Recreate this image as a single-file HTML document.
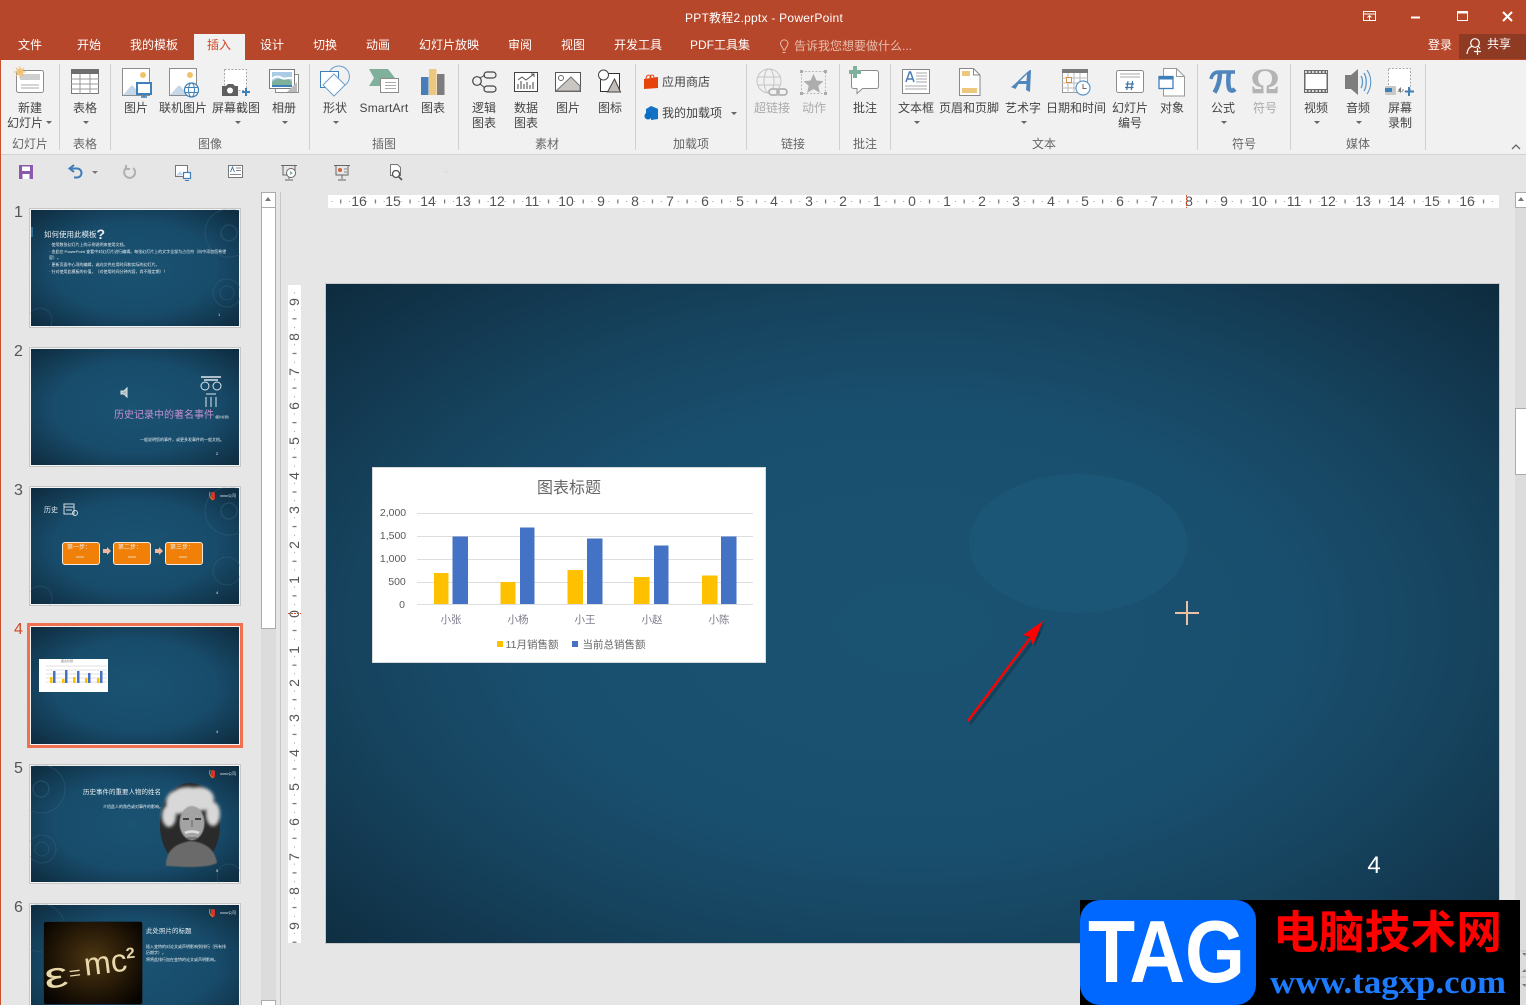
<!DOCTYPE html>
<html lang="zh"><head><meta charset="utf-8"><title>PPT教程2.pptx - PowerPoint</title>
<style>
html,body{margin:0;padding:0;background:#e6e6e6;width:1526px;height:1005px;overflow:hidden}
#p{width:1526px;height:1005px;position:relative;overflow:hidden;font:12px "Liberation Sans","Noto Sans CJK SC",sans-serif;color:#444}
.a{position:absolute}
.t{position:absolute;transform:translate(-50%,-50%);white-space:nowrap;line-height:1}
.w{color:#fff}.g{color:#666}.d{color:#aaa}
svg{position:absolute;left:0;top:0;overflow:visible}
.l{margin-top:1px}
.th{position:absolute;left:29px;width:210px;height:118px;border:1px solid #c6c6c6;overflow:hidden;background:#f4f4f4}
.th .s{position:absolute;left:1px;top:1px;width:208px;height:116px;filter:blur(.3px);background:radial-gradient(farthest-corner at 50% 50%,#1a5272 0%,#184c6b 55%,#0e2b3e 100%)}
.th .x{position:absolute;white-space:nowrap;color:#e8eef2;line-height:1}
.num{position:absolute;left:14px;font-size:16px;color:#555;line-height:1}
</style></head><body><div id="p">

<div class="a" style="left:0;top:0;width:1526px;height:60px;background:#b7472a"></div>
<div class="a" style="left:194px;top:34px;width:51px;height:26px;background:#f1f1f1"></div>
<div class="a" style="left:1459px;top:34px;width:67px;height:25px;background:#8f3a22"></div>
<div class="a" style="left:1px;top:60px;width:1525px;height:94px;background:#f1f1f1;border-bottom:1px solid #d2d2d2"></div>
<div class="a" style="left:0;top:60px;width:1px;height:945px;background:#c8512f"></div>

<div class="t w" style="left:764px;top:18px;letter-spacing:.25px">PPT教程2.pptx - PowerPoint</div>
<div class="t w" style="left:30px;top:45px">文件</div>
<div class="t w" style="left:89px;top:45px">开始</div>
<div class="t w" style="left:154px;top:45px">我的模板</div>
<div class="t" style="left:219px;top:45px;color:#d24726">插入</div>
<div class="t w" style="left:272px;top:45px">设计</div>
<div class="t w" style="left:325px;top:45px">切换</div>
<div class="t w" style="left:378px;top:45px">动画</div>
<div class="t w" style="left:449px;top:45px">幻灯片放映</div>
<div class="t w" style="left:520px;top:45px">审阅</div>
<div class="t w" style="left:573px;top:45px">视图</div>
<div class="t w" style="left:638px;top:45px">开发工具</div>
<div class="t w" style="left:720px;top:45px">PDF工具集</div>
<div class="t" style="left:853px;top:46px;color:#e6bdae">告诉我您想要做什么...</div>
<div class="t w" style="left:1440px;top:45px">登录</div>
<div class="t w" style="left:1499px;top:44px">共享</div>

<!-- ribbon labels -->
<div class="t l" style="left:30px;top:107px">新建</div><div class="t l" style="left:25px;top:122px">幻灯片</div>
<div class="t l" style="left:85px;top:107px">表格</div>
<div class="t l" style="left:136px;top:107px">图片</div>
<div class="t l" style="left:183px;top:107px">联机图片</div>
<div class="t l" style="left:236px;top:107px">屏幕截图</div>
<div class="t l" style="left:284px;top:107px">相册</div>
<div class="t l" style="left:335px;top:107px">形状</div>
<div class="t l" style="left:384px;top:107px;letter-spacing:.2px">SmartArt</div>
<div class="t l" style="left:433px;top:107px">图表</div>
<div class="t l" style="left:484px;top:107px">逻辑</div><div class="t l" style="left:484px;top:122px">图表</div>
<div class="t l" style="left:526px;top:107px">数据</div><div class="t l" style="left:526px;top:122px">图表</div>
<div class="t l" style="left:568px;top:107px">图片</div>
<div class="t l" style="left:610px;top:107px">图标</div>
<div class="t" style="left:686px;top:82px">应用商店</div>
<div class="t" style="left:692px;top:113px">我的加载项</div>
<div class="t l d" style="left:772px;top:107px">超链接</div>
<div class="t l d" style="left:814px;top:107px">动作</div>
<div class="t l" style="left:865px;top:107px">批注</div>
<div class="t l" style="left:916px;top:107px">文本框</div>
<div class="t l" style="left:969px;top:107px">页眉和页脚</div>
<div class="t l" style="left:1023px;top:107px">艺术字</div>
<div class="t l" style="left:1076px;top:107px">日期和时间</div>
<div class="t l" style="left:1130px;top:107px">幻灯片</div><div class="t l" style="left:1130px;top:122px">编号</div>
<div class="t l" style="left:1172px;top:107px">对象</div>
<div class="t l" style="left:1223px;top:107px">公式</div>
<div class="t l d" style="left:1265px;top:107px">符号</div>
<div class="t l" style="left:1316px;top:107px">视频</div>
<div class="t l" style="left:1358px;top:107px">音频</div>
<div class="t l" style="left:1400px;top:107px">屏幕</div><div class="t l" style="left:1400px;top:122px">录制</div>

<div class="t g" style="left:30px;top:144px">幻灯片</div>
<div class="t g" style="left:85px;top:144px">表格</div>
<div class="t g" style="left:210px;top:144px">图像</div>
<div class="t g" style="left:384px;top:144px">插图</div>
<div class="t g" style="left:547px;top:144px">素材</div>
<div class="t g" style="left:691px;top:144px">加载项</div>
<div class="t g" style="left:793px;top:144px">链接</div>
<div class="t g" style="left:865px;top:144px">批注</div>
<div class="t g" style="left:1044px;top:144px">文本</div>
<div class="t g" style="left:1244px;top:144px">符号</div>
<div class="t g" style="left:1358px;top:144px">媒体</div>

<!-- ribbon icons -->
<svg width="1526" height="190" viewBox="0 0 1526 190" fill="none">
<!-- window buttons -->
<g stroke="#fff">
<rect x="1363.500" y="11.500" width="12" height="9" stroke-width="1"/><path d="M1363 14h13M1369.500 20v-4M1367.500 17.500l2-2 2 2"/>
<path d="M1411 17.500h9" stroke-width="2"/>
<rect x="1457.500" y="11.500" width="10" height="9" stroke-width="1"/><path d="M1457 12.500h11" stroke-width="2"/>
<path d="M1503 12l9 9M1512 12l-9 9" stroke-width="2"/>
<circle cx="1475" cy="43" r="4.300" stroke-width="1.200"/><path d="M1467 54c.5-5 3-7.500 5-7.500M1478 46.500c1 .5 1.500 1 2 2M1474 51.500h7M1477.500 48v7" stroke-width="1.200"/>
</g>
<!-- bulb -->
<path d="M783.500 50c0-2-3-3.500-3-7a3.800 3.800 0 0 1 7.500 0c0 3.500-3 5-3 7zM782.500 52.500h3" stroke="#e6bdae"/>
<!-- separators -->
<path d="M59.500 64v86M110.500 64v86M309.500 64v86M458.500 64v86M635.500 64v86M746.500 64v86M839.500 64v86M890.500 64v86M1197.500 64v86M1290.500 64v86M1425.500 64v86" stroke="#d0d0d0"/>
<!-- carets -->
<path d="M46 121h6l-3 3zM83 121h6l-3 3zM235 121h6l-3 3zM282 121h6l-3 3zM333 121h6l-3 3zM731 112h6l-3 3zM914 121h6l-3 3zM1021 121h6l-3 3zM1221 121h6l-3 3zM1314 121h6l-3 3zM1356 121h6l-3 3z" fill="#666"/>
<path d="M1512 149l4-4 4 4" stroke="#666" stroke-width="1.300"/>
<!-- new slide -->
<rect x="16.500" y="70.500" width="27" height="22" rx="2" fill="#fff" stroke="#8c8c8c"/>
<rect x="20" y="74" width="20" height="6" fill="#cfcfcf"/><path d="M21 85h18M21 88h18" stroke="#aaa"/>
<circle cx="20" cy="72" r="3.500" fill="#f5cf8a"/><path d="M20 66v12M14 72h12M16 68l8 8M24 68l-8 8" stroke="#f0bd6c"/>
<!-- table -->
<rect x="71.500" y="69.500" width="27" height="24" fill="#fff" stroke="#7a7a7a"/><rect x="71" y="69" width="28" height="5" fill="#6e6e6e"/>
<path d="M71 79h28M71 84h28M71 89h28M80 74v20M90 74v20" stroke="#999"/>
<!-- picture -->
<rect x="122.500" y="68.500" width="27" height="27" fill="#fff" stroke="#8c8c8c"/>
<path d="M123 95l9-10 5 5 2-2 6 7z" fill="#c6d7e8"/><circle cx="143" cy="75" r="3" fill="#eec46a"/>
<rect x="137" y="83" width="14" height="11" fill="#fff" stroke="#3f80b8" stroke-width="2"/><path d="M141 97h6M144 94v3" stroke="#3f80b8" stroke-width="1.500"/>
<!-- online picture -->
<rect x="169.500" y="68.500" width="27" height="27" fill="#fff" stroke="#8c8c8c"/>
<path d="M170 95l9-10 5 5 2-2 6 7z" fill="#c6d7e8"/><circle cx="190" cy="75" r="3" fill="#eec46a"/>
<circle cx="191.500" cy="90" r="7" fill="#fff" stroke="#3f80b8" stroke-width="1.200"/><ellipse cx="191.500" cy="90" rx="3" ry="7" stroke="#3f80b8"/><path d="M184.500 87.500h14M184.500 92.500h14" stroke="#3f80b8"/>
<!-- screenshot -->
<rect x="224.500" y="69.500" width="22" height="21" fill="#fff" stroke="#aaa" stroke-dasharray="2 1.500"/>
<path d="M222 86h4l2-2h5l2 2h3v10h-16z" fill="#5f5f5f"/><circle cx="230" cy="90.500" r="3" fill="#fff"/>
<path d="M246 88v8M242 92h8" stroke="#3f80b8" stroke-width="2"/>
<!-- album -->
<rect x="275.500" y="74.500" width="23" height="18" fill="#fff" stroke="#8c8c8c"/>
<rect x="269.500" y="69.500" width="25" height="19" fill="#fff" stroke="#7a7a7a"/>
<rect x="272" y="72" width="20" height="14" fill="#a9cbe6"/><path d="M272 82c5-5 8-2 12-3s6 1 8 3v4h-20z" fill="#7fb09b"/><path d="M272 79c3-3 7-3 10-1s6-1 10 0" stroke="#fff" stroke-width="2"/>
<path d="M272 86h20" stroke="#3f80b8" stroke-width="2"/><path d="M287 92l10-10v10z" fill="#bbb"/>
<!-- shapes -->
<rect x="320.500" y="71.500" width="18" height="16" fill="#fff" stroke="#3f80b8"/>
<path d="M330 71a10.500 10.500 0 1 1 8 16" stroke="#6a9fcc"/>
<path d="M334 74l11 11-11 11-11-11z" fill="#fff" stroke="#6a9fcc"/>
<!-- smartart -->
<path d="M369 69h19l7 9-7 8h-19l5-8z" fill="#7fb09b"/>
<rect x="380.500" y="78.500" width="18" height="14" fill="#fff" stroke="#8c8c8c"/><path d="M385 82.500h11M385 85.500h11M385 88.500h11" stroke="#aaa"/>
<!-- chart -->
<rect x="421" y="77" width="7.500" height="18" fill="#4a7db5"/><rect x="429" y="69" width="7.500" height="26" fill="#eec77e"/><rect x="437" y="74" width="7.500" height="21" fill="#7d7d7d"/>
<!-- logic -->
<circle cx="477" cy="81" r="4.300" stroke="#444" stroke-width="1.200"/><rect x="484" y="72" width="12" height="6" rx="3" stroke="#444" stroke-width="1.200"/><rect x="484" y="86" width="12" height="6" rx="3" stroke="#444" stroke-width="1.200"/><path d="M480 78l5-3M480 84l5 4" stroke="#444"/>
<!-- data chart -->
<rect x="514.500" y="72.500" width="23" height="19" fill="#fff" stroke="#444"/><path d="M518 89v-5M521 89v-8M524 89v-5M527 89v-7M530 89v-4M533 89v-7" stroke="#444"/><path d="M518 80l4-3 4 3 8-6M531 74h3v3" stroke="#555"/>
<!-- image -->
<rect x="555.500" y="72.500" width="25" height="19" fill="#fff" stroke="#555"/><path d="M556 91l15-14 9 9v5z" fill="#c9c5c0" stroke="#777"/><circle cx="561" cy="78" r="2.500" stroke="#666"/>
<!-- icons -->
<rect x="600.500" y="73.500" width="19" height="18" fill="#fff" stroke="#333"/><path d="M614.500 79l6 13h-13z" fill="#c2bdb7" stroke="#444"/><circle cx="603.500" cy="75" r="5" fill="#fff" stroke="#444"/>
<!-- store -->
<path d="M644 79l14-2v11l-14 1z" fill="#e8420b"/><path d="M646 79c0-5 5-5 5-1M650 78c0-4 4-4 4 0" stroke="#e8420b"/>
<path d="M651 106l7 3v10l-7 1z" fill="#0a6fc2"/><path d="M651 106l-5 3v5h5v6l7-2v-9z" fill="#1272c4"/><circle cx="648" cy="116" r="3.500" fill="#0a6fc2"/>
<!-- hyperlink -->
<g stroke="#c4c4c4"><circle cx="769" cy="81" r="12"/><ellipse cx="769" cy="81" rx="5" ry="12"/><path d="M758 77h22M758 85h22"/></g>
<rect x="769" y="89" width="10" height="6" rx="3" stroke="#b2b2b2" stroke-width="1.800" fill="#f1f1f1"/><rect x="777" y="89" width="10" height="6" rx="3" stroke="#b2b2b2" stroke-width="1.800"/>
<!-- action -->
<rect x="801.500" y="71.500" width="24" height="22" stroke="#bbb" stroke-dasharray="2 1.500"/><path d="M800 70h3v3h-3zM824 70h3v3h-3zM800 92h3v3h-3zM824 92h3v3h-3z" fill="#aaa"/>
<path d="M813.500 74l3 6.500 7 .7-5.200 4.500 1.600 7-6.400-3.600-6.400 3.600 1.600-7-5.200-4.500 7-.7z" fill="#adadad"/>
<!-- comment -->
<path d="M853.500 70.500h23a2 2 0 0 1 2 2v14a2 2 0 0 1-2 2h-14l-5.500 5v-5h-3.500a2 2 0 0 1-2-2v-14a2 2 0 0 1 2-2z" fill="#fff" stroke="#8c8c8c"/>
<path d="M855 66v12M849 72h12" stroke="#7fb09b" stroke-width="4"/>
<!-- textbox -->
<rect x="902.500" y="69.500" width="27" height="24" fill="#fff" stroke="#888"/><path d="M906 82l3.500-10h1l3.500 10M907.500 79h5" stroke="#4a7db5" stroke-width="1.500"/><path d="M916 73h11M916 76h11M916 79h11M916 82h11M905 86h22M905 89h22" stroke="#aaa"/>
<!-- header/footer -->
<path d="M959.500 68.500h14l6.500 6.500v20.500h-20.500z" fill="#fff" stroke="#888"/><path d="M973.500 68.500v6.500h6.500" stroke="#888"/><rect x="962" y="71" width="8" height="5" fill="#eec77e"/><rect x="962" y="88" width="15" height="5" fill="#eec77e"/>
<!-- wordart -->
<path d="M1011 87c6-4 12-12 19-17h1l-1 22-4-2 .5-6h-8l-3 5zM1020 81h6.500l.5-7z" fill="#4f86bd"/>
<!-- date -->
<rect x="1062.500" y="69.500" width="25" height="23" fill="#fff" stroke="#999"/><rect x="1062" y="69" width="26" height="4" fill="#7a7a7a"/><path d="M1062 78h26M1062 83h26M1062 88h26M1068 73v20M1074 73v20M1080 73v20" stroke="#bbb"/><rect x="1066.500" y="77.500" width="5" height="5" fill="#fff" stroke="#e08a3a"/>
<circle cx="1083" cy="88" r="7" fill="#fff" stroke="#5d97c9" stroke-width="1.200"/><path d="M1083 84v4.500h3.500" stroke="#666"/>
<!-- slide number -->
<rect x="1116.500" y="70.500" width="27" height="22" rx="2" fill="#fff" stroke="#8c8c8c"/><path d="M1120 74h20M1120 77h20" stroke="#aaa"/><path d="M1128 81l-1.200 9M1132.500 81l-1.200 9M1125.500 84h8.500M1125 87.500h8.500" stroke="#3f72a8" stroke-width="1.200"/>
<!-- object -->
<g transform="translate(1 0)"><path d="M1162.500 68.500h13l8 8v19.500h-21z" fill="#fff" stroke="#999"/><path d="M1175.500 68.500v8h8" stroke="#999"/><rect x="1158" y="76.500" width="14" height="12" fill="#fff" stroke="#3f80b8" stroke-width="1.300"/><rect x="1158" y="76" width="14" height="3.500" fill="#3f80b8"/></g>
<!-- pi -->
<path d="M1211 79c1-5 4-7 8-7h16" stroke="#4f86bd" stroke-width="3.500"/><path d="M1220 72c0 8-2 15-5.500 20.500" stroke="#4f86bd" stroke-width="4.500"/><path d="M1229 72c-1 7-1 12 0 16 1 3 3.500 3.500 6 1" stroke="#4f86bd" stroke-width="4.500"/>
<!-- omega -->
<text x="1265" y="93" text-anchor="middle" font-family="Liberation Serif" font-weight="700" font-size="36" fill="#b4b4b4">Ω</text>
<!-- video -->
<g transform="translate(2 0)"><rect x="1302" y="70" width="24" height="23" fill="#6b6b6b"/><rect x="1303.500" y="74" width="21" height="15" fill="#fff"/><path d="M1303 72h22M1303 91h22" stroke="#fff" stroke-width="1.500" stroke-dasharray="2 1.500"/></g>
<!-- audio -->
<g transform="translate(2 0)"><path d="M1343 75h6l7-6v26l-7-6h-6z" fill="#7d7d7d"/><path d="M1359 76c2 3 2 9 0 12M1362 73c3 5 3 13 0 18" stroke="#5d97c9" stroke-width="1.300"/><path d="M1365 70c5 7 5 17 0 24" stroke="#5d97c9" stroke-width="1.100"/></g>
<!-- record -->
<g transform="translate(2 0)"><rect x="1386.500" y="68.500" width="22" height="23" fill="#fff" stroke="#aaa" stroke-dasharray="2 1.500"/><rect x="1383" y="86" width="11" height="9" rx="1" fill="#c8c8c8"/><path d="M1383 90h7" stroke="#3f80b8" stroke-width="4"/><path d="M1396 90l3-3v6z" fill="#777"/><path d="M1400 90h2" stroke="#777"/>
<path d="M1407 87v9M1403 91.500h9" stroke="#3f80b8" stroke-width="2"/></g>
<!-- QAT -->
<path d="M19 165h14v14h-14z" fill="#8a5aad"/><rect x="22" y="166.500" width="8" height="4.500" fill="#fff"/><rect x="22.500" y="174" width="7" height="5" fill="#fff"/>
<path d="M74 165l-4.500 3.500 4.500 3.500" stroke="#3f7cb8" stroke-width="2"/><path d="M70 168.500h7a4.500 4.500 0 0 1 0 9h-3" stroke="#3f7cb8" stroke-width="2"/><path d="M92 171h6l-3 3z" fill="#777"/>
<path d="M133 168a5.500 5.500 0 1 1-6-.5M126 165v4h4" stroke="#b0b0b0" stroke-width="2"/>
<rect x="175.500" y="165.500" width="12" height="11" fill="#fff" stroke="#777"/><path d="M176 176l4-5 3 4z" fill="#c6d7e8"/><rect x="183.500" y="172.500" width="7" height="6" fill="#fff" stroke="#3f80b8" stroke-width="1.200"/><path d="M185 180.500h4" stroke="#3f80b8"/>
<rect x="228.500" y="165.500" width="14" height="12" fill="#fff" stroke="#777"/><path d="M230.500 172l2-5 2 5" stroke="#3f80b8"/><path d="M236 168h5M236 170.500h5M230 174.500h11" stroke="#888"/>
<path d="M281 165.500h16M283 166v9h12v-9M289 175v4M285 180h8" stroke="#666"/><circle cx="291" cy="173" r="4.500" fill="#fff" stroke="#666"/><path d="M290 171l3 2-3 2z" fill="#7fb09b"/>
<path d="M334 165.500h16M336 166v9h12v-9M342 175v4M338 180h8" stroke="#666"/><circle cx="340" cy="170" r="2" fill="#d2603a"/><path d="M344 169h3M344 172h3" stroke="#888"/>
<path d="M390.500 164.500h7l3 3v8h-10z" fill="#fff" stroke="#777"/><circle cx="396" cy="174" r="3.500" fill="#fff" stroke="#555" stroke-width="1.300"/><path d="M398.500 176.500l3.500 3.500" stroke="#555" stroke-width="1.600"/>
<path d="M443 171h6l-3 3z" fill="#e0e0e0"/><path d="M443 169h6" stroke="#e0e0e0"/>
</svg>

<!-- rulers -->
<svg width="1526" height="1005" viewBox="0 0 1526 1005" fill="none" font-family="Liberation Sans" font-size="14" style="pointer-events:none">
<defs>
<pattern id="rh" patternUnits="userSpaceOnUse" x="912" y="195" width="34.630" height="13"><rect x="8.200" y="6" width="1" height="1" fill="#999"/><rect x="17" y="4.500" width="1" height="4" fill="#555"/><rect x="25.800" y="6" width="1" height="1" fill="#999"/></pattern>
<pattern id="rv" patternUnits="userSpaceOnUse" x="288" y="613" width="13" height="34.630"><rect x="6" y="8.200" width="1" height="1" fill="#999"/><rect x="4.500" y="17" width="4" height="1" fill="#555"/><rect x="6" y="25.800" width="1" height="1" fill="#999"/></pattern>
</defs>
<rect x="328" y="195" width="1171" height="13" fill="#fff"/><rect x="328" y="195" width="1171" height="13" fill="url(#rh)"/>
<rect x="288" y="285" width="13" height="658" fill="#fff"/><rect x="288" y="285" width="13" height="658" fill="url(#rv)"/>
<g fill="#555" text-anchor="middle">
<text x="359" y="206">16</text><text x="393" y="206">15</text><text x="428" y="206">14</text><text x="463" y="206">13</text><text x="497" y="206">12</text><text x="532" y="206">11</text><text x="566" y="206">10</text><text x="601" y="206">9</text><text x="635" y="206">8</text><text x="670" y="206">7</text><text x="705" y="206">6</text><text x="740" y="206">5</text><text x="774" y="206">4</text><text x="809" y="206">3</text><text x="843" y="206">2</text><text x="877" y="206">1</text><text x="912" y="206">0</text><text x="947" y="206">1</text><text x="982" y="206">2</text><text x="1016" y="206">3</text><text x="1051" y="206">4</text><text x="1085" y="206">5</text><text x="1120" y="206">6</text><text x="1154" y="206">7</text><text x="1189" y="206">8</text><text x="1224" y="206">9</text><text x="1259" y="206">10</text><text x="1294" y="206">11</text><text x="1328" y="206">12</text><text x="1363" y="206">13</text><text x="1397" y="206">14</text><text x="1432" y="206">15</text><text x="1467" y="206">16</text>
<text transform="translate(299,302) rotate(-90)">9</text><text transform="translate(299,337) rotate(-90)">8</text><text transform="translate(299,372) rotate(-90)">7</text><text transform="translate(299,406) rotate(-90)">6</text><text transform="translate(299,441) rotate(-90)">5</text><text transform="translate(299,476) rotate(-90)">4</text><text transform="translate(299,510) rotate(-90)">3</text><text transform="translate(299,545) rotate(-90)">2</text><text transform="translate(299,580) rotate(-90)">1</text><text transform="translate(299,614) rotate(-90)">0</text><text transform="translate(299,650) rotate(-90)">1</text><text transform="translate(299,683) rotate(-90)">2</text><text transform="translate(299,718) rotate(-90)">3</text><text transform="translate(299,753) rotate(-90)">4</text><text transform="translate(299,787) rotate(-90)">5</text><text transform="translate(299,822) rotate(-90)">6</text><text transform="translate(299,857) rotate(-90)">7</text><text transform="translate(299,891) rotate(-90)">8</text><text transform="translate(299,926) rotate(-90)">9</text>
</g>
<path d="M1186.500 195v13" stroke="#d0542f" stroke-dasharray="2 1"/><path d="M288 613.500h13" stroke="#d0542f" stroke-dasharray="2 1"/>
</svg>

<!-- scrollbars -->
<div class="a" style="left:261px;top:192px;width:15px;height:813px;background:#dcdcdc"></div>
<div class="a" style="left:261px;top:192px;width:13px;height:14px;background:#fff;border:1px solid #ababab"></div>
<div class="a" style="left:261px;top:207px;width:13px;height:420px;background:#fff;border:1px solid #ababab"></div>
<div class="a" style="left:261px;top:1000px;width:13px;height:5px;background:#fff;border:1px solid #ababab;border-bottom:0"></div>
<div class="a" style="left:265px;top:197px;width:0;height:0;border:3.500px solid transparent;border-bottom:4px solid #777;border-top:0"></div>
<div class="a" style="left:280px;top:192px;width:1px;height:813px;background:#c6c6c6"></div>
<div class="a" style="left:1515px;top:192px;width:11px;height:813px;background:#dcdcdc"></div>
<div class="a" style="left:1515px;top:192px;width:11px;height:14px;background:#fff;border:1px solid #ababab;border-right:0"></div>
<div class="a" style="left:1515px;top:408px;width:11px;height:65px;background:#fff;border:1px solid #ababab;border-right:0"></div>
<div class="a" style="left:1518px;top:197px;width:0;height:0;border:3.500px solid transparent;border-bottom:4px solid #777;border-top:0"></div>

<!-- thumbnails -->
<div class="num" style="top:205px">1</div>
<div class="th" style="top:208px"><div class="s">
<svg width="208" height="116" fill="none" stroke="#4d7c96" opacity=".25"><circle cx="198" cy="23" r="24"/><circle cx="198" cy="23" r="8" stroke-width="1.500"/><circle cx="196" cy="83" r="14"/><circle cx="196" cy="83" r="7"/><circle cx="9" cy="110" r="12"/></svg>
<div class="a" style="left:0;top:17px;width:2px;height:10px;background:#2c6d92"></div>
<div class="x" style="left:13px;top:17px;font-size:7.500px">如何使用此模板<b style="font-size:14px;vertical-align:-2px">?</b></div>
<div class="x" style="left:18px;top:33px;font-size:4px">· 使用数张幻灯片上的示例说明来使用文档。</div>
<div class="x" style="left:18px;top:40px;font-size:4px">· 由此在 PowerPoint 查看中对幻灯片进行编辑。每张幻灯片上的文字全部为占位符（向中添加您希望</div>
<div class="x" style="left:18px;top:46px;font-size:4px">容）。</div>
<div class="x" style="left:18px;top:53px;font-size:4px">· 更新页面中心项的编辑，或向文件应用时间和实际的幻灯片。</div>
<div class="x" style="left:18px;top:60px;font-size:4px">· 针对使用此模板的价值，（对使用时间分钟内容，尚不限定期）！</div>
<div class="x" style="left:187px;top:103px;font-size:4px">1</div>
</div></div>

<div class="num" style="top:344px">2</div>
<div class="th" style="top:347px"><div class="s">
<svg width="208" height="116" fill="none" stroke="#dde6ea"><path d="M90 42h3l3-3v9l-3-3h-3z" fill="#aab7bd"/><path d="M170 28h20M173 31h14" stroke-width="1.500"/><circle cx="174" cy="37" r="4"/><circle cx="186" cy="37" r="4"/><path d="M175 45h10M175 48v10M180 48v10M185 48v10"/></svg>
<div class="x" style="left:83px;top:62px;font-size:10px;color:#c490d0">历史记录中的著名事件<span style="font-size:3px;color:#eee"> (图片标题)</span></div>
<div class="x" style="left:109px;top:89px;font-size:4px">一般说明您的事件，或更多发事件的一般文档。</div>
<div class="x" style="left:185px;top:103px;font-size:4px">2</div>
</div></div>

<div class="num" style="top:483px">3</div>
<div class="th" style="top:486px"><div class="s">
<svg width="208" height="116" fill="none"><g stroke="#4d7c96" opacity=".25"><circle cx="198" cy="23" r="24"/><circle cx="198" cy="23" r="8" stroke-width="1.500"/><circle cx="196" cy="83" r="14"/><circle cx="9" cy="110" r="12"/></g>
<rect x="33" y="16" width="10" height="10" stroke="#cfdde5"/><path d="M33 19h10M35 22h6" stroke="#cfdde5"/><circle cx="44" cy="25" r="2.500" stroke="#cfdde5"/>
<path d="M72 61h4v-2l4 4-4 4v-2h-4zM124 61h4v-2l4 4-4 4v-2h-4z" fill="#f2b89a"/>
<rect x="180" y="4" width="4" height="8" rx="2" fill="#d4342a"/><path d="M179 4c-1 4 0 6 3 8" stroke="#e0882c"/></svg>
<div class="x" style="left:189px;top:6px;font-size:4px">xxxx公司</div>
<div class="x" style="left:13px;top:19px;font-size:7px">历史</div>
<div class="a" style="left:31px;top:54px;width:36px;height:21px;background:#f18008;border:1px solid #f5e9dc;border-radius:3px"></div>
<div class="a" style="left:82px;top:54px;width:36px;height:21px;background:#f18008;border:1px solid #f5e9dc;border-radius:3px"></div>
<div class="a" style="left:134px;top:54px;width:36px;height:21px;background:#f18008;border:1px solid #f5e9dc;border-radius:3px"></div>
<div class="x" style="left:36px;top:57px;font-size:6px">第一步：</div><div class="x" style="left:87px;top:57px;font-size:6px">第二步：</div><div class="x" style="left:139px;top:57px;font-size:6px">第三步：</div>
<div class="x" style="left:45px;top:67px;font-size:4px">xxxx</div><div class="x" style="left:97px;top:67px;font-size:4px">xxxx</div><div class="x" style="left:148px;top:67px;font-size:4px">xxxx</div>
<div class="x" style="left:185px;top:103px;font-size:4px">4</div>
</div></div>

<div class="a" style="left:27px;top:623px;width:210px;height:119px;border:3px solid #f07050"></div>
<div class="num" style="top:622px;color:#d24726">4</div>
<div class="th" style="top:626px;left:30px;width:208px;height:117px;border-color:#f4f4f4"><div class="s" style="left:0;top:0;width:208px;height:117px">
<div class="a" style="left:8px;top:32px;width:69px;height:33px;background:#fff"></div>
<div class="x" style="left:30px;top:33px;font-size:3px;color:#777">图表标题</div>
<svg width="208" height="116"><path d="M15 39h61M15 43h61M15 47h61M15 51h61M15 55h61" stroke="#d8d8d8" stroke-width=".8"/>
<g fill="#ffc000"><rect x="19" y="50" width="2.500" height="6"/><rect x="31" y="52" width="2.500" height="4"/><rect x="42" y="50" width="2.500" height="6"/><rect x="54" y="51" width="2.500" height="5"/><rect x="66" y="51" width="2.500" height="5"/></g>
<g fill="#4472c4"><rect x="22" y="44" width="2.500" height="12"/><rect x="34" y="43" width="2.500" height="13"/><rect x="46" y="44" width="2.500" height="12"/><rect x="57" y="46" width="2.500" height="10"/><rect x="69" y="44" width="2.500" height="12"/></g></svg>
<div class="x" style="left:185px;top:103px;font-size:4px">4</div>
</div></div>

<div class="num" style="top:761px">5</div>
<div class="th" style="top:764px"><div class="s">
<svg width="208" height="116" fill="none"><defs><filter id="bl"><feGaussianBlur stdDeviation="1.500"/></filter><filter id="bs"><feGaussianBlur stdDeviation=".6"/></filter></defs>
<g stroke="#4d7c96" opacity=".25"><circle cx="10" cy="23" r="24"/><circle cx="10" cy="23" r="8" stroke-width="1.500"/><circle cx="11" cy="83" r="14"/><circle cx="11" cy="83" r="7"/><circle cx="198" cy="110" r="12"/></g>
<ellipse cx="159" cy="59" rx="30" ry="42" fill="#2a2a2a"/>
<g filter="url(#bl)" fill="#d8d8d8"><ellipse cx="148" cy="36" rx="13" ry="12"/><ellipse cx="168" cy="33" rx="15" ry="12"/><ellipse cx="138" cy="50" rx="7" ry="11"/><ellipse cx="182" cy="48" rx="7" ry="12"/><ellipse cx="157" cy="27" rx="14" ry="6"/></g>
<path d="M135 100c0-15 8-22 24-25 15 1 25 8 27 22-6 3-15 4-27 4-10 0-18-1-24-1z" fill="#6a6a6a" filter="url(#bs)"/>
<ellipse cx="161" cy="57" rx="12.500" ry="17" fill="#a3a3a3" filter="url(#bs)"/>
<path d="M152 53h6M164 53h6" stroke="#222" stroke-width="1.500"/><path d="M161 54v7" stroke="#666"/><path d="M154 67c4-2 10-2 14 0" stroke="#dedede" stroke-width="2.500"/><path d="M156 72h10" stroke="#555"/>
<rect x="180" y="4" width="4" height="8" rx="2" fill="#d4342a"/><path d="M179 4c-1 4 0 6 3 8" stroke="#e0882c"/></svg>
<div class="x" style="left:189px;top:6px;font-size:4px">xxxx公司</div>
<div class="x" style="left:52px;top:24px;font-size:6.500px">历史事件的重要人物的姓名</div>
<div class="x" style="left:72px;top:39px;font-size:4px">介绍此人的角色或对事件的影响。</div>
<div class="x" style="left:185px;top:103px;font-size:4px">5</div>
</div></div>

<div class="num" style="top:900px">6</div>
<div class="th" style="top:903px;height:120px"><div class="s" style="height:119px">
<svg width="208" height="119" fill="none"><g stroke="#4d7c96" opacity=".25"><circle cx="10" cy="23" r="24"/></g><rect x="180" y="4" width="4" height="8" rx="2" fill="#d4342a"/><path d="M179 4c-1 4 0 6 3 8" stroke="#e0882c"/></svg>
<div class="a" style="left:12px;top:16px;width:98px;height:82px;border-radius:3px;border:1px solid #17384c;background:radial-gradient(ellipse at 50% 45%,#4d3713 0,#2a1c08 45%,#060300 90%)"></div>
<svg width="208" height="119" fill="#e8d9ac" font-family="Liberation Sans">
<g transform="rotate(-7 60 60)"><text x="12" y="78" font-size="36" textLength="24" lengthAdjust="spacingAndGlyphs">ε</text><text x="37" y="72" font-size="18" textLength="12" lengthAdjust="spacingAndGlyphs">=</text><text x="53" y="70" font-size="32" textLength="43" lengthAdjust="spacingAndGlyphs">mc</text><text x="96" y="58" font-size="15" font-weight="700" textLength="9" lengthAdjust="spacingAndGlyphs">2</text></g></svg>
<div class="x" style="left:189px;top:6px;font-size:4px">xxxx公司</div>
<div class="x" style="left:115px;top:24px;font-size:6.500px">此处照片的标题</div>
<div class="x" style="left:115px;top:40px;font-size:4px">插入变特的对论文或声明影响到排行（所有排</div>
<div class="x" style="left:115px;top:46px;font-size:4px">历期字）。</div>
<div class="x" style="left:115px;top:53px;font-size:4px">将将此排行加在变特的论文或声明影响。</div>
</div></div>

<!-- main slide -->
<div class="a" style="left:326px;top:284px;width:1173px;height:659px;outline:1px solid #c8c8c8;background:radial-gradient(farthest-corner at 50% 52%,#1a5272 0%,#194f6e 45%,#16435e 68%,#0e2b3e 100%)"></div>
<div class="a" style="left:969px;top:474px;width:218px;height:139px;border-radius:50%;background:#1b5676"></div>
<div class="t w" style="left:1374px;top:866px;font-size:24px">4</div>

<!-- chart -->
<div class="a" style="left:372px;top:467px;width:392px;height:194px;background:#fff;border:1px solid #d9d9d9"></div>
<div class="t" style="left:569px;top:489px;font-size:16px;color:#666">图表标题</div>
<div class="t" style="left:393px;top:513px;font-size:10.500px;color:#595959">2,000</div>
<div class="t" style="left:393px;top:536px;font-size:10.500px;color:#595959">1,500</div>
<div class="t" style="left:393px;top:559px;font-size:10.500px;color:#595959">1,000</div>
<div class="t" style="left:397px;top:582px;font-size:10.500px;color:#595959">500</div>
<div class="t" style="left:402px;top:605px;font-size:10.500px;color:#595959">0</div>
<svg width="1526" height="1005" viewBox="0 0 1526 1005" fill="none">
<path d="M417 513.500h336M417 536.500h336M417 559.500h336M417 582.500h336M417 604.500h336" stroke="#dedede"/>
<g fill="#ffc000"><rect x="434" y="573" width="14.500" height="31"/><rect x="500.500" y="582" width="15" height="22"/><rect x="567.500" y="570" width="15.500" height="34"/><rect x="634" y="577" width="15.500" height="27"/><rect x="702" y="575.500" width="15.500" height="28.500"/></g>
<g fill="#4472c4"><rect x="452.500" y="536.500" width="15.500" height="67.500"/><rect x="520" y="527.500" width="14.500" height="76.500"/><rect x="587" y="538.500" width="15.500" height="65.500"/><rect x="654" y="545.500" width="14.500" height="58.500"/><rect x="721" y="536.500" width="15.500" height="67.500"/></g>
<rect x="497" y="641" width="6" height="6" fill="#ffc000"/><rect x="572" y="641" width="6" height="6" fill="#4472c4"/>
<!-- arrow -->
<path d="M968 722l70-92" stroke="#102f42" stroke-opacity=".5" stroke-width="3" transform="translate(2 2)"/>
<path d="M968 721l66-88" stroke="#f00" stroke-width="2.400"/>
<path d="M1043 621l-10 24-3.500-8-6.500-2z" fill="#102f42" fill-opacity=".45" transform="translate(2 2)"/>
<path d="M1043 621l-10 24-3.500-8-6.500-2z" fill="#f00"/>
<path d="M1187 601v24M1175 613h24" stroke="#ecc0a2" stroke-width="2"/>
<!-- logo -->
<rect x="1080" y="900" width="440" height="105" fill="#000"/>
<rect x="1080" y="900" width="176" height="105" rx="20" fill="#0068ff"/>
<text x="1088" y="982" font-family="Liberation Sans" font-weight="700" font-size="88" fill="#fff" textLength="157" lengthAdjust="spacingAndGlyphs">TAG</text>
<text x="1273" y="948" font-family="Noto Sans CJK SC" font-weight="700" font-size="45" fill="#f00" textLength="229" lengthAdjust="spacingAndGlyphs">电脑技术网</text>
<text x="1270" y="993" font-family="Liberation Serif" font-weight="700" font-size="33" fill="#1c7bff" textLength="236" lengthAdjust="spacingAndGlyphs">www.tagxp.com</text>
<path d="M1521 951h5M1521 977h5" stroke="#bbb"/><path d="M1522 953l3 3 1-3zM1522 972l3-3 1 3zM1522 984l3 3 1-3z" fill="#777"/>
</svg>
<div class="t" style="left:451px;top:620px;font-size:10.500px;color:#7b7b8b">小张</div>
<div class="t" style="left:518px;top:620px;font-size:10.500px;color:#7b7b8b">小杨</div>
<div class="t" style="left:585px;top:620px;font-size:10.500px;color:#7b7b8b">小王</div>
<div class="t" style="left:652px;top:620px;font-size:10.500px;color:#7b7b8b">小赵</div>
<div class="t" style="left:719px;top:620px;font-size:10.500px;color:#7b7b8b">小陈</div>
<div class="t" style="left:532px;top:645px;font-size:10.500px;color:#666">11月销售额</div>
<div class="t" style="left:614px;top:645px;font-size:10.500px;color:#666">当前总销售额</div>
</div></body></html>
